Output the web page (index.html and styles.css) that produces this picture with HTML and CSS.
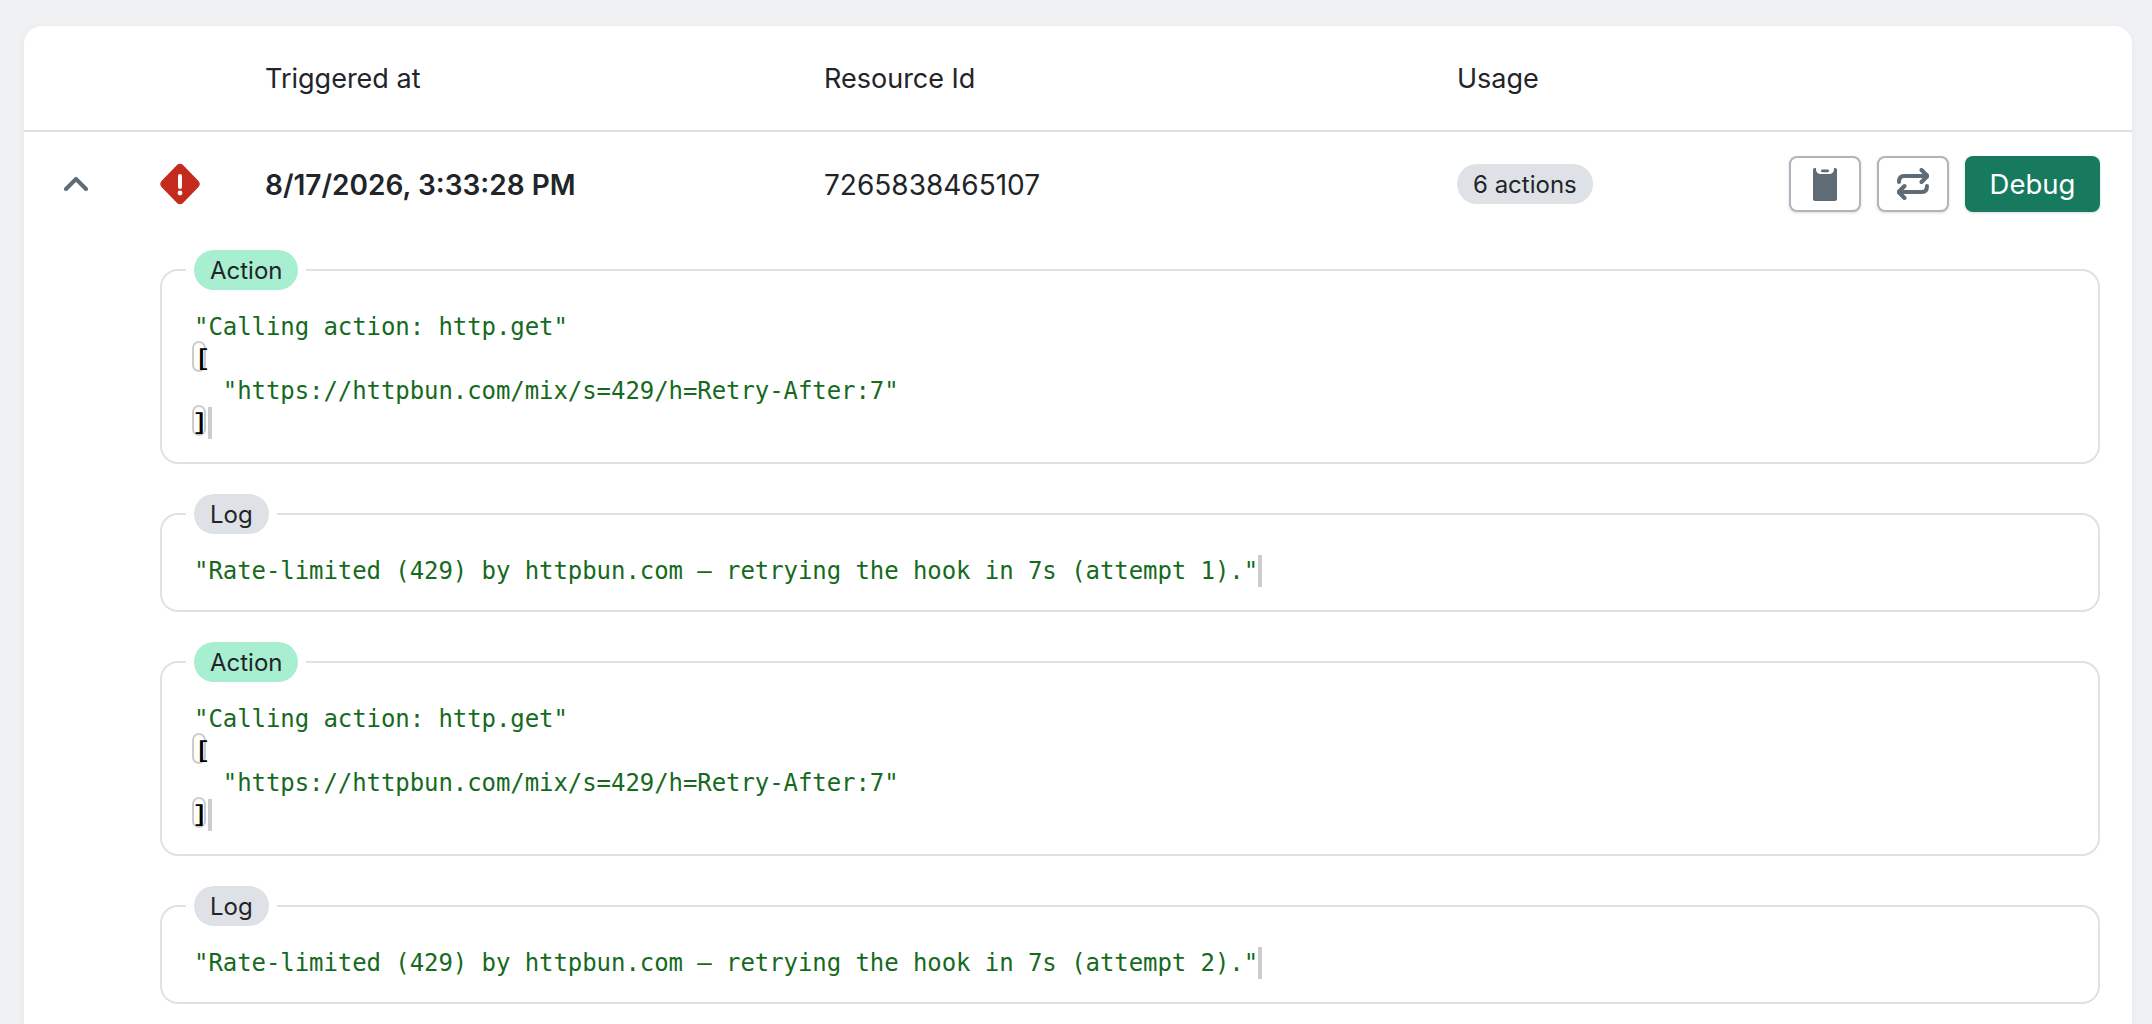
FILE: index.html
```html
<!DOCTYPE html>
<html lang="en">
<head>
<meta charset="utf-8">
<title>Runs</title>
<link rel="stylesheet" href="styles.css">
</head>
<body>
<main class="card">
  <div class="cols head">
    <div></div>
    <div>Triggered at</div>
    <div>Resource Id</div>
    <div>Usage</div>
    <div></div>
  </div>
  <div class="cols row">
    <div class="status">
      <svg class="chevron" width="24" height="14" viewBox="0 0 24 14"><path d="M2 12 L12 2 L22 12" fill="none" stroke="#5f6b75" stroke-width="4" stroke-linecap="round" stroke-linejoin="round"/></svg>
      <svg class="alert" width="40" height="42" viewBox="0 0 40 42"><path d="M17 2 C18.7 0.4 21.3 0.4 23 2 L38.500 18 C40.200 19.700 40.200 22.300 38.500 24 L23 40 C21.300 41.600 18.700 41.600 17 40 L1.500 24 C-0.200 22.300 -0.200 19.700 1.500 18 Z" fill="#c42b1c"/><rect x="18" y="11" width="4" height="15" rx="2" fill="#fff"/><circle cx="20" cy="30" r="2.400" fill="#fff"/></svg>
    </div>
    <div class="date">8/17/2026, 3:33:28 PM</div>
    <div class="resource">7265838465107</div>
    <div><span class="count">6 actions</span></div>
    <div class="actions">
      <button class="btn" type="button" aria-label="Copy">
        <svg width="24" height="33" viewBox="0 0 24 33"><path d="M2 0 H3 V1 C3 4 5 6 8 6 H16 C19 6 21 4 21 1 V0 H22 C23.200 0 24 .8 24 2 V31 C24 32.200 23.200 33 22 33 H2 C.8 33 0 32.200 0 31 V2 C0 .8 .8 0 2 0 Z" fill="#5f6b75"/><rect x="8" y="1.500" width="8" height="2.800" rx="1.400" fill="#5f6b75"/></svg>
      </button>
      <button class="btn" type="button" aria-label="Replay">
        <svg width="32" height="32" viewBox="0 0 32 32" fill="none" stroke="#5f6b75" stroke-width="4" stroke-linecap="round" stroke-linejoin="round"><path d="M2 14 C2 10 4 8 7 8 H30 M24.500 2 L30.500 8 L24.500 14"/><path d="M30 18 C30 22 28 24 25 24 H2 M7.500 18 L1.500 24 L7.500 30"/></svg>
      </button>
      <button class="debug" type="button">Debug</button>
    </div>
  </div>
  <div class="logs">
    <fieldset class="box">
      <legend class="legend"><span class="tag green">Action</span></legend>
      <pre class="code">"Calling action: http.get"
<span class="bracket"><span class="glyph open">[</span></span>
  "https://httpbun.com/mix/s=429/h=Retry-After:7"
<span class="bracket"><span class="glyph close">]</span></span><span class="cursor"></span></pre>
    </fieldset>
    <fieldset class="box">
      <legend class="legend"><span class="tag">Log</span></legend>
      <pre class="code">"Rate-limited (429) by httpbun.com — retrying the hook in 7s (attempt 1)."<span class="cursor"></span></pre>
    </fieldset>
    <fieldset class="box">
      <legend class="legend"><span class="tag green">Action</span></legend>
      <pre class="code">"Calling action: http.get"
<span class="bracket"><span class="glyph open">[</span></span>
  "https://httpbun.com/mix/s=429/h=Retry-After:7"
<span class="bracket"><span class="glyph close">]</span></span><span class="cursor"></span></pre>
    </fieldset>
    <fieldset class="box">
      <legend class="legend"><span class="tag">Log</span></legend>
      <pre class="code">"Rate-limited (429) by httpbun.com — retrying the hook in 7s (attempt 2)."<span class="cursor"></span></pre>
    </fieldset>
  </div>
</main>
</body>
</html>
```

FILE: styles.css
```css
html, body {
  margin: 0;
  height: 1024px;
  overflow: hidden;
  background: #f0f1f3;
}
body {
  padding: 26px 20px 0 24px;
  box-sizing: border-box;
  font-family: Inter, "Liberation Sans", sans-serif;
  font-size: 27px;
  color: #212529;
}
.card {
  background: #fff;
  border-radius: 18px 18px 0 0;
  box-shadow: 0 2px 8px rgba(0, 0, 0, 0.05);
  height: 1100px;
}
.cols {
  display: grid;
  grid-template-columns: 241px 559px 633px 1fr auto;
  align-items: center;
  padding-right: 32px;
}
.head {
  height: 104px;
  border-bottom: 2px solid #dee2e6;
}
.row {
  padding-top: 24px;
  padding-bottom: 8px;
}
.status {
  display: flex;
  align-items: center;
  padding-left: 40px;
  gap: 72px;
}
.chevron { flex: none; }
.alert { flex: none; }
.date { font-weight: 600; font-size: 28px; padding-top: 2px; }
.resource { font-size: 28px; padding-top: 2px; }
.count {
  display: block;
  width: fit-content;
  height: 40px;
  background: #dee2e6;
  border-radius: 20px;
  font-size: 24px;
  line-height: 42px;
  padding: 0 16px;
}
.actions {
  display: flex;
  gap: 16px;
}
.btn {
  width: 72px;
  height: 56px;
  padding: 0;
  background: #fff;
  border: 2px solid #adb5bd;
  border-radius: 8px;
  box-shadow: 0 1px 3px rgba(0, 0, 0, 0.15);
  display: flex;
  align-items: center;
  justify-content: center;
}
.debug {
  width: 135px;
  height: 56px;
  padding: 0;
  background: #177a5e;
  color: #fff;
  border: 0;
  border-radius: 8px;
  box-shadow: 0 1px 3px rgba(0, 0, 0, 0.15);
  font: inherit;
  font-size: 27.5px;
}
.logs {
  display: flex;
  flex-direction: column;
  gap: 30px;
  padding: 30px 32px 0 136px;
}
.box {
  margin: 0;
  min-width: 0;
  padding: 25px 32px 23px;
  border: 2px solid #dee2e6;
  border-radius: 18px;
}
.legend {
  padding: 0 8px;
  margin: 0 0 -4px -8px;
  height: 40px;
}
.tag {
  display: block;
  height: 40px;
  padding: 0 16px;
  border-radius: 20px;
  background: #dee2e6;
  font-size: 24px;
  line-height: 42px;
}
.tag.green { background: #a8eed1; padding-right: 15px; }
.code {
  margin: 0;
  font-family: "DejaVu Sans Mono", "Liberation Mono", monospace;
  font-size: 24px;
  line-height: 32px;
  letter-spacing: -0.07px;
  color: #166a1e;
}
.bracket {
  position: relative;
  color: #000;
}
.bracket::before {
  content: "";
  position: absolute;
  left: -2px;
  top: -4px;
  width: 10px;
  height: 27px;
  border: 2px solid #ccc;
  border-radius: 7px;
}
.glyph {
  display: inline-block;
  width: 14.4px;
  text-align: center;
  font-family: Inter, sans-serif;
  font-size: 24px;
  letter-spacing: 0;
}
.glyph.open { transform: translateX(1.5px) scaleX(1.5); }
.glyph.close { transform: translateX(-1px) scaleX(1.5); }
.cursor {
  display: inline-block;
  width: 4px;
  height: 32px;
  vertical-align: top;
  background: #ccc;
}
```
